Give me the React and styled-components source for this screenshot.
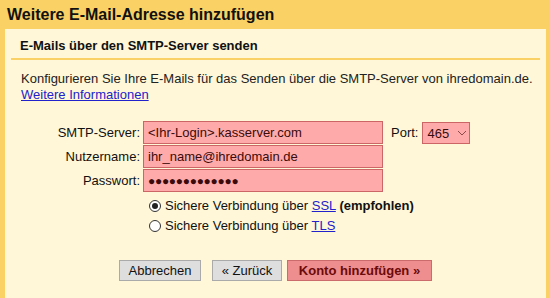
import React from 'react'
import styled, { createGlobalStyle, css } from 'styled-components'

const Global = createGlobalStyle`
  html, body {
    margin: 0;
    background: #fad165;
    font-family: Arial, "Liberation Sans", sans-serif;
    overflow: hidden;
  }
`

const Page = styled.div`
  width: 550px;
  height: 298px;
  display: flex;
  flex-direction: column;
`

const Title = styled.h1`
  margin: 0;
  height: 29px;
  padding: 6px 0 0 7px;
  box-sizing: border-box;
  font-size: 16px;
  font-weight: bold;
  color: #111;
`

const Panel = styled.div`
  flex: 1;
  margin: 0 4px 0 5px;
  background: #fff7d8;
  padding: 0 6px;
`

const SubTitle = styled.h2`
  margin: 0;
  padding: 9px 0 0 9px;
  height: 31px;
  box-sizing: border-box;
  font-size: 13px;
  font-weight: bold;
  color: #111;
  border-bottom: 2px solid #fad165;
`

const Intro = styled.p`
  margin: 0;
  padding: 11px 0 0 10px;
  font-size: 13px;
  line-height: 16px;
  color: #222;
`

const Link = styled.a`
  color: #2222cc;
  text-decoration: underline;
`

const Form = styled.div`
  margin-top: 18px;
  display: grid;
  grid-template-columns: 132px auto;
  row-gap: 1px;
  align-items: center;
`

const Label = styled.label`
  font-size: 13px;
  color: #111;
  text-align: right;
  padding-right: 3px;
`

const Field = styled.div`
  display: flex;
  align-items: center;
`

const pinkBox = css`
  box-sizing: border-box;
  height: 23px;
  background: #ffaaaa;
  border: 1px solid #cc6666;
  font-family: Arial, "Liberation Sans", sans-serif;
  font-size: 13px;
  color: #3b0a0a;
`

const Input = styled.div`
  ${pinkBox}
  width: 240px;
  padding: 3px 4px;
  ${props => props.$dots && css`
    font-size: 12px;
    letter-spacing: -0.3px;
    line-height: 14px;
    padding-top: 4px;
  `}
`

const PortLabel = styled.span`
  font-size: 13px;
  color: #111;
  margin: 0 4px 0 8px;
`

const Select = styled.div`
  ${pinkBox}
  width: 48px;
  height: 22px;
  padding: 3px 0 0 4px;
  display: flex;
  gap: 8px;
`

const Options = styled.div`
  margin: 6px 0 0 138px;
  display: flex;
  flex-direction: column;
  gap: 5px;
`

const Option = styled.div`
  display: flex;
  align-items: center;
  font-size: 13px;
  color: #111;
  gap: 4px;
`

const Radio = styled.span`
  width: 12px;
  height: 12px;
  box-sizing: border-box;
  border-radius: 50%;
  border: 1px solid #333;
  background: #fff;
  display: inline-flex;
  align-items: center;
  justify-content: center;
  &::after {
    content: '';
    width: 6px;
    height: 6px;
    border-radius: 50%;
    background: ${props => (props.$checked ? '#222' : 'transparent')};
  }
`

const Buttons = styled.div`
  margin: 27px 0 0 108px;
  display: flex;
  gap: 5px;
`

const Button = styled.button`
  height: 21px;
  width: ${props => props.$width}px;
  padding: 0;
  margin-right: ${props => props.$space || 0}px;
  font-family: Arial, "Liberation Sans", sans-serif;
  font-size: 13px;
  color: #111;
  background: #dedede;
  border: 1px solid #aaa;
  ${props => props.$primary && css`
    background: #ee8e8e;
    border-color: #cc6b6b;
    color: #6b0a0a;
    font-weight: bold;
  `}
`

export default function App() {
  return (
    <Page>
      <Global />
      <Title>Weitere E-Mail-Adresse hinzufügen</Title>
      <Panel>
        <SubTitle>E-Mails über den SMTP-Server senden</SubTitle>
        <Intro>
          Konfigurieren Sie Ihre E-Mails für das Senden über die SMTP-Server von ihredomain.de.
          <br />
          <Link href="#">Weitere Informationen</Link>
        </Intro>
        <Form>
          <Label>SMTP-Server:</Label>
          <Field>
            <Input>&lt;Ihr-Login&gt;.kasserver.com</Input>
            <PortLabel>Port:</PortLabel>
            <Select>
              465
              <svg width="10" height="14" viewBox="0 0 10 14">
                <path d="M1 5 L5 9 L9 5" fill="none" stroke="#8a4a4a" strokeWidth="1" />
              </svg>
            </Select>
          </Field>
          <Label>Nutzername:</Label>
          <Field>
            <Input>ihr_name@ihredomain.de</Input>
          </Field>
          <Label>Passwort:</Label>
          <Field>
            <Input $dots>●●●●●●●●●●●●●</Input>
          </Field>
        </Form>
        <Options>
          <Option>
            <Radio $checked />
            <span>
              Sichere Verbindung über <Link href="#">SSL</Link> <b>(empfohlen)</b>
            </span>
          </Option>
          <Option>
            <Radio />
            <span>
              Sichere Verbindung über <Link href="#">TLS</Link>
            </span>
          </Option>
        </Options>
        <Buttons>
          <Button $width={82} $space={6}>Abbrechen</Button>
          <Button $width={70}>« Zurück</Button>
          <Button $width={145} $primary>Konto hinzufügen »</Button>
        </Buttons>
      </Panel>
    </Page>
  )
}
